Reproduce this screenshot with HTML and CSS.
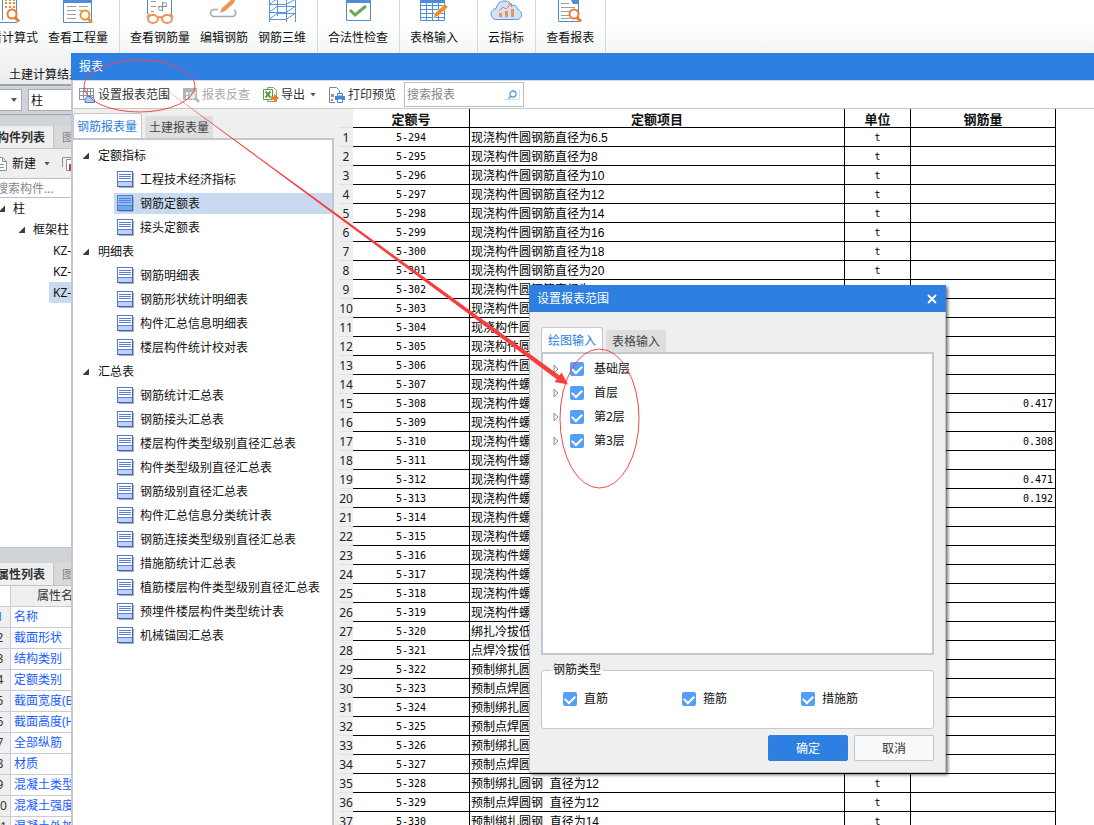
FILE: index.html
```html
<!DOCTYPE html>
<html lang="zh-CN">
<head>
<meta charset="utf-8">
<title>报表</title>
<link rel="stylesheet" href="styles.css">
</head>
<body>
<svg class="defs" aria-hidden="true">
  <symbol id="sheet" viewBox="0 0 17 17">
    <rect x="2" y="2" width="15" height="15" fill="#a9b0c0"/>
    <rect x=".5" y=".5" width="15" height="15" class="sheet-page"/>
    <rect x="1" y="10" width="14" height="5" class="sheet-foot"/>
    <path d="M2 3.500h12M2 5.500h12M2 7.500h12M1 10.500h14" stroke="#5b7fd6" fill="none"/>
    <path d="M.5 15.500h15V.5" stroke="#3f62bb" fill="none"/>
  </symbol>
  <symbol id="tri-open" viewBox="0 0 8 8"><path d="M7 .5V7H.5z" fill="#3c3c3c"/></symbol>
  <symbol id="tri-shut" viewBox="0 0 6 10"><path d="M1 1.200v7.600L5 5z" fill="#fff" stroke="#8a8a8a"/></symbol>
  <symbol id="magnifier" viewBox="0 0 16 16"><circle cx="7" cy="6" r="4.500" fill="#fff" stroke="currentColor" stroke-width="2"/><path d="M10 9.500l4 4" stroke="currentColor" stroke-width="3"/></symbol>
</svg>

<div class="app">
  <header class="ribbon">
    <div class="group">
      <button class="tool"><svg viewBox="0 0 32 24"><path d="M1 22.500V14.500h6v8h18M10.500 20V-1h14v22" fill="none" stroke="#4c8ed8"/><path d="M13 3h2M17 3h2M21 3h2M13 7h2M17 7h2M21 7h2M13 0h2M17 0h2M21 0h2" stroke="#f0883a" stroke-width="2"/><use href="#magnifier" x="13" y="8" width="16" height="16" color="#ef7b2c"/></svg><span>查看计算式</span></button>
      <button class="tool"><svg viewBox="0 0 32 24"><path d="M1.500 0v22.500h28V0" fill="#fff" stroke="#4c8ed8"/><path d="M1 1.500h29" stroke="#4c8ed8" stroke-width="3"/><path d="M5 6.500h9M5 10.500h9M5 14.500h9M5 18.500h9M17 6.500h9M17 10.500h4" stroke="#9aa0a8"/><use href="#magnifier" x="16" y="9" width="16" height="16" color="#f0952b"/></svg><span>查看工程量</span></button>
    </div>
    <div class="group">
      <button class="tool"><svg viewBox="0 0 32 24"><path d="M3.500 0v14M27.500 0v14" stroke="#4c8ed8"/><path d="M7 1.500h5M7 6.500h5M7 11.500h3M18.500 2v9M14 6.500h9" stroke="#8e959d"/><circle cx="16.500" cy="8.500" r="2" fill="none" stroke="#8e959d"/><circle cx="20.500" cy="4.500" r="2" fill="none" stroke="#8e959d"/><path d="M3 17l3-3M29 17l-3-3M13 18q3-2 6 0" fill="none" stroke="#f0935a" stroke-width="2"/><ellipse cx="9" cy="19" rx="5" ry="4" fill="#fff" stroke="#f0935a" stroke-width="2"/><ellipse cx="23" cy="19" rx="5" ry="4" fill="#fff" stroke="#f0935a" stroke-width="2"/></svg><span>查看钢筋量</span></button>
      <button class="tool"><svg viewBox="0 0 32 24"><path d="M10 9.500H6a3.500 3.500 0 0 0 0 7h18a3.500 3.500 0 0 0 2-6.500" fill="none" stroke="#a3a8ae" stroke-width="1.500"/><path d="M12 13l2-5L23 0h4l-1 3-9 8z" fill="#f0935a"/></svg><span>编辑钢筋</span></button>
      <button class="tool"><svg viewBox="0 0 32 24"><path d="M3.500 0v22M11.500 0v16M20.500 0v22M29.500 0v22M3 4.500h17l9-5M3 12.500h17l9-6M3 19.500h17l9-6M3 12.500l8-6h18M3 19.500l8-6h18M3 4.500l7-5" fill="none" stroke="#5a94dc"/></svg><span>钢筋三维</span></button>
    </div>
    <div class="group">
      <button class="tool"><svg viewBox="0 0 32 24"><path d="M4.500 0v20.500h24V0" fill="#fff" stroke="#4c8ed8"/><path d="M4 1.500h25" stroke="#4c8ed8" stroke-width="3"/><path d="M8 10l5 5L24 6" fill="none" stroke="#6aaa50" stroke-width="3"/></svg><span>合法性检查</span></button>
    </div>
    <div class="group wide">
      <button class="tool"><svg viewBox="0 0 32 24"><path d="M2.500 0v20.500h24V0M3 5.500h23M3 9.500h23M3 13.500h23M3 17.500h23M8.500 3v17M14.500 3v17M20.500 3v17" fill="#fff" stroke="#4c8ed8"/><path d="M2 1.500h25" stroke="#4c8ed8" stroke-width="3"/><path d="M15 18l2-5L27 4l3 3-10 9z" fill="#f08c22" stroke="#fff" stroke-width=".5"/></svg><span>表格输入</span></button>
    </div>
    <div class="group">
      <button class="tool"><svg viewBox="0 0 32 24"><path d="M7 19.500a5.500 5.500 0 0 1-1-11C7 4 10 1 14.500 1S21 3 22 5.500c3-1 5.500 1 5.500 4a5 5 0 0 1-2 10z" fill="#cfe2f8" stroke="#5a96da"/><path d="M10.500 17v-4M16.500 17v-6M22.500 17v-8" stroke="#f0935a" stroke-width="3"/><path d="M9 11l4-4 3 2 5-5M18 4h3.500v3" fill="none" stroke="#ef7f3a"/></svg><span>云指标</span></button>
    </div>
    <div class="group">
      <button class="tool"><svg viewBox="0 0 32 24"><path d="M4.500 0v21.500h20V0" fill="#fff" stroke="#4c8ed8"/><path d="M17 0h8v4h-6z" fill="#4c8ed8"/><path d="M7 3.500h8M7 7.500h14M7 11.500h9M7 15.500h8M7 18.500h9" stroke="#9aa0a8"/><use href="#magnifier" x="13" y="8" width="16" height="16" color="#ef7b2c"/></svg><span>查看报表</span></button>
    </div>
  </header>
  <div class="ribbon-caption">土建计算结果</div>
  <div class="combos">
    <label class="combo small"><select aria-label="楼层"><option></option></select></label>
    <label class="combo"><select aria-label="构件类型"><option>柱</option></select></label>
  </div>
  <aside class="side">
    <nav class="dock-tabs"><button class="on">构件列表</button><button>图纸管理</button></nav>
    <div class="side-tools">
      <button><svg width="14" height="16" viewBox="0 0 14 16"><path d="M.5 1.500h8l4 4v9H.5zM8.500 1.500v4h4M3 8.500h7M3 11.500h7" fill="#fff" stroke="#8b949e"/></svg>新建<i class="caret"></i></button>
      <button aria-label="复制"><svg width="16" height="16" viewBox="0 0 16 16"><path d="M.5 11V1.500H9" fill="none" stroke="#8b949e"/><path d="M4.500 3.500h7l3 3v8h-10z" fill="#fff" stroke="#8b949e"/><path d="M7 8h8v7H7z" fill="#d83a3a"/><path d="M9 10l4 4M13 10l-4 4" stroke="#fff"/></svg></button>
    </div>
    <input class="side-search" type="text" placeholder="搜索构件..." aria-label="搜索构件">
    <ul class="parts">
      <li class="p1"><svg><use href="#tri-open"/></svg>柱</li>
      <li class="p2"><svg><use href="#tri-open"/></svg>框架柱</li>
      <li class="p3"><span>KZ-1</span></li>
      <li class="p3"><span>KZ-2</span></li>
      <li class="p3"><span class="picked">KZ-3</span></li>
    </ul>
    <nav class="dock-tabs second"><button class="on">属性列表</button><button>图层管理</button></nav>
    <table class="props">
      <tr class="head"><th></th><td>属性名称</td></tr>
      <tr class="first"><th>1</th><td>名称</td></tr>
      <tr><th>2</th><td>截面形状</td></tr>
      <tr><th>3</th><td>结构类别</td></tr>
      <tr><th>4</th><td>定额类别</td></tr>
      <tr><th>5</th><td>截面宽度(B边)</td></tr>
      <tr><th>6</th><td>截面高度(H边)</td></tr>
      <tr><th>7</th><td>全部纵筋</td></tr>
      <tr><th>8</th><td>材质</td></tr>
      <tr><th>9</th><td>混凝土类型</td></tr>
      <tr><th>10</th><td>混凝土强度</td></tr>
      <tr><th>11</th><td>混凝土外加剂</td></tr>
    </table>
  </aside>
</div>

<section class="report">
  <h1 class="titlebar">报表</h1>
  <div class="toolbar">
    <button><svg width="17" height="16" viewBox="0 0 17 16"><path d="M.5 1.500h14v11H.5zM1 4.500h13M1 8.500h13M4.500 1v11M8.500 1v11M11.500 1v11" fill="#fff" stroke="#8b929c"/><path d="M6 15.500h9.500v-3l-3-3H8l-2 3z" fill="#a9cdf6" stroke="#4685d4"/></svg>设置报表范围</button>
    <button class="off" disabled><svg width="17" height="16" viewBox="0 0 17 16"><path d="M0 1h14v4H0zM0 5h3v8H0z" fill="#b4b4b4"/><path d="M.5 1.500h13v11H.5zM1 8.500h12M5.500 1v11M9.500 1v11" fill="none" stroke="#b4b4b4"/><circle cx="9.500" cy="9" r="3.500" fill="#eee" stroke="#b4b4b4"/><path d="M12 11l4 4" stroke="#b4b4b4" stroke-width="2.500"/></svg>报表反查</button>
    <button><svg width="16" height="16" viewBox="0 0 16 16"><path d="M4.500 3V.5h6l3 3v11h-9V13" fill="#fff" stroke="#8b949e"/><path d="M.5 2.500h9v10h-9z" fill="#fff" stroke="#5a9e3c"/><path d="M2.500 4.500l5 6M7.500 4.500l-5 6" stroke="#5a9e3c" stroke-width="2"/><path d="M8 9.500h3V7l5 4-5 4v-2.500H8z" fill="#f07c22"/></svg>导出<i class="caret"></i></button>
    <button><svg width="17" height="16" viewBox="0 0 17 16"><path d="M6 15.500H.5v-15h7l3 3V6" fill="#fff" stroke="#7b828c"/><path d="M2 7h3v3H2zM2 12h2v2H2z" fill="#8b949e"/><path d="M6 9h10v4H6z" fill="#4685d4"/><path d="M8.500 6.500h5V9h-5zM8.500 12h5v3.500h-5z" fill="#fff" stroke="#4685d4"/></svg>打印预览</button>
    <label class="find"><input type="text" placeholder="搜索报表" aria-label="搜索报表"><svg width="16" height="11" viewBox="0 0 16 11"><circle cx="9" cy="5" r="3" fill="none" stroke="#4a9fe0" stroke-width="1.300"/><path d="M7 7L4.500 9.500" stroke="#4a9fe0" stroke-width="1.500"/><path d="M0 10.500h15.500V0" fill="none" stroke="#ddd"/></svg></label>
  </div>
  <div class="report-body">
    <nav class="catalog">
      <div class="tabs"><button class="on">钢筋报表量</button><button>土建报表量</button></div>
      <div class="tree">
        <h2><svg><use href="#tri-open"/></svg>定额指标</h2>
        <ul>
          <li><a href="#"><svg><use href="#sheet"/></svg>工程技术经济指标</a></li>
          <li><a href="#" class="picked"><svg><use href="#sheet"/></svg>钢筋定额表</a></li>
          <li><a href="#"><svg><use href="#sheet"/></svg>接头定额表</a></li>
        </ul>
        <h2><svg><use href="#tri-open"/></svg>明细表</h2>
        <ul>
          <li><a href="#"><svg><use href="#sheet"/></svg>钢筋明细表</a></li>
          <li><a href="#"><svg><use href="#sheet"/></svg>钢筋形状统计明细表</a></li>
          <li><a href="#"><svg><use href="#sheet"/></svg>构件汇总信息明细表</a></li>
          <li><a href="#"><svg><use href="#sheet"/></svg>楼层构件统计校对表</a></li>
        </ul>
        <h2><svg><use href="#tri-open"/></svg>汇总表</h2>
        <ul>
          <li><a href="#"><svg><use href="#sheet"/></svg>钢筋统计汇总表</a></li>
          <li><a href="#"><svg><use href="#sheet"/></svg>钢筋接头汇总表</a></li>
          <li><a href="#"><svg><use href="#sheet"/></svg>楼层构件类型级别直径汇总表</a></li>
          <li><a href="#"><svg><use href="#sheet"/></svg>构件类型级别直径汇总表</a></li>
          <li><a href="#"><svg><use href="#sheet"/></svg>钢筋级别直径汇总表</a></li>
          <li><a href="#"><svg><use href="#sheet"/></svg>构件汇总信息分类统计表</a></li>
          <li><a href="#"><svg><use href="#sheet"/></svg>钢筋连接类型级别直径汇总表</a></li>
          <li><a href="#"><svg><use href="#sheet"/></svg>措施筋统计汇总表</a></li>
          <li><a href="#"><svg><use href="#sheet"/></svg>植筋楼层构件类型级别直径汇总表</a></li>
          <li><a href="#"><svg><use href="#sheet"/></svg>预埋件楼层构件类型统计表</a></li>
          <li><a href="#"><svg><use href="#sheet"/></svg>机械锚固汇总表</a></li>
        </ul>
      </div>
    </nav>
    <div class="sheet-area">
      <table class="quota">
        <colgroup><col class="c-no"><col class="c-code"><col class="c-name"><col class="c-unit"><col class="c-qty"></colgroup>
        <thead><tr><th class="no"></th><th>定额号</th><th>定额项目</th><th>单位</th><th>钢筋量</th></tr></thead>
        <tbody>
          <tr><th>1</th><td>5-294</td><td>现浇构件圆钢筋直径为6.5</td><td>t</td><td></td></tr>
          <tr><th>2</th><td>5-295</td><td>现浇构件圆钢筋直径为8</td><td>t</td><td></td></tr>
          <tr><th>3</th><td>5-296</td><td>现浇构件圆钢筋直径为10</td><td>t</td><td></td></tr>
          <tr><th>4</th><td>5-297</td><td>现浇构件圆钢筋直径为12</td><td>t</td><td></td></tr>
          <tr><th>5</th><td>5-298</td><td>现浇构件圆钢筋直径为14</td><td>t</td><td></td></tr>
          <tr><th>6</th><td>5-299</td><td>现浇构件圆钢筋直径为16</td><td>t</td><td></td></tr>
          <tr><th>7</th><td>5-300</td><td>现浇构件圆钢筋直径为18</td><td>t</td><td></td></tr>
          <tr><th>8</th><td>5-301</td><td>现浇构件圆钢筋直径为20</td><td>t</td><td></td></tr>
          <tr><th>9</th><td>5-302</td><td>现浇构件圆钢筋直径为22</td><td>t</td><td></td></tr>
          <tr><th>10</th><td>5-303</td><td>现浇构件圆钢筋</td><td>t</td><td></td></tr>
          <tr><th>11</th><td>5-304</td><td>现浇构件圆钢筋</td><td>t</td><td></td></tr>
          <tr><th>12</th><td>5-305</td><td>现浇构件圆钢筋</td><td>t</td><td></td></tr>
          <tr><th>13</th><td>5-306</td><td>现浇构件圆钢筋</td><td>t</td><td></td></tr>
          <tr><th>14</th><td>5-307</td><td>现浇构件螺纹钢</td><td>t</td><td></td></tr>
          <tr><th>15</th><td>5-308</td><td>现浇构件螺纹钢</td><td>t</td><td>0.417</td></tr>
          <tr><th>16</th><td>5-309</td><td>现浇构件螺纹钢</td><td>t</td><td></td></tr>
          <tr><th>17</th><td>5-310</td><td>现浇构件螺纹钢</td><td>t</td><td>0.308</td></tr>
          <tr><th>18</th><td>5-311</td><td>现浇构件螺纹钢</td><td>t</td><td></td></tr>
          <tr><th>19</th><td>5-312</td><td>现浇构件螺纹钢</td><td>t</td><td>0.471</td></tr>
          <tr><th>20</th><td>5-313</td><td>现浇构件螺纹钢</td><td>t</td><td>0.192</td></tr>
          <tr><th>21</th><td>5-314</td><td>现浇构件螺纹钢</td><td>t</td><td></td></tr>
          <tr><th>22</th><td>5-315</td><td>现浇构件螺纹钢</td><td>t</td><td></td></tr>
          <tr><th>23</th><td>5-316</td><td>现浇构件螺纹钢</td><td>t</td><td></td></tr>
          <tr><th>24</th><td>5-317</td><td>现浇构件螺纹钢</td><td>t</td><td></td></tr>
          <tr><th>25</th><td>5-318</td><td>现浇构件螺纹钢</td><td>t</td><td></td></tr>
          <tr><th>26</th><td>5-319</td><td>现浇构件螺纹钢</td><td>t</td><td></td></tr>
          <tr><th>27</th><td>5-320</td><td>绑扎冷拔低碳</td><td>t</td><td></td></tr>
          <tr><th>28</th><td>5-321</td><td>点焊冷拔低碳</td><td>t</td><td></td></tr>
          <tr><th>29</th><td>5-322</td><td>预制绑扎圆钢</td><td>t</td><td></td></tr>
          <tr><th>30</th><td>5-323</td><td>预制点焊圆钢</td><td>t</td><td></td></tr>
          <tr><th>31</th><td>5-324</td><td>预制绑扎圆钢</td><td>t</td><td></td></tr>
          <tr><th>32</th><td>5-325</td><td>预制点焊圆钢</td><td>t</td><td></td></tr>
          <tr><th>33</th><td>5-326</td><td>预制绑扎圆钢</td><td>t</td><td></td></tr>
          <tr><th>34</th><td>5-327</td><td>预制点焊圆钢</td><td>t</td><td></td></tr>
          <tr><th>35</th><td>5-328</td><td>预制绑扎圆钢&nbsp; 直径为12</td><td>t</td><td></td></tr>
          <tr><th>36</th><td>5-329</td><td>预制点焊圆钢&nbsp; 直径为12</td><td>t</td><td></td></tr>
          <tr><th>37</th><td>5-330</td><td>预制绑扎圆钢&nbsp; 直径为14</td><td>t</td><td></td></tr>
        </tbody>
      </table>
    </div>
  </div>
</section>

<section class="dialog" role="dialog" aria-label="设置报表范围">
  <header class="titlebar"><h2>设置报表范围</h2><button aria-label="关闭"><svg width="10" height="10" viewBox="0 0 10 10"><path d="M1 1l8 8M9 1L1 9" stroke="#fff" stroke-width="1.800"/></svg></button></header>
  <div class="dialog-body">
    <div class="tabs"><button class="on">绘图输入</button><button>表格输入</button></div>
    <div class="floors">
      <div><svg><use href="#tri-shut"/></svg><label><input type="checkbox" checked>基础层</label></div>
      <div><svg><use href="#tri-shut"/></svg><label><input type="checkbox" checked>首层</label></div>
      <div><svg><use href="#tri-shut"/></svg><label><input type="checkbox" checked>第2层</label></div>
      <div><svg><use href="#tri-shut"/></svg><label><input type="checkbox" checked>第3层</label></div>
    </div>
    <fieldset class="types">
      <legend>钢筋类型</legend>
      <label><input type="checkbox" checked>直筋</label>
      <label><input type="checkbox" checked>箍筋</label>
      <label><input type="checkbox" checked>措施筋</label>
    </fieldset>
    <footer><button class="primary">确定</button><button>取消</button></footer>
  </div>
</section>

<svg class="marks" width="700" height="500" viewBox="0 0 700 500" aria-hidden="true">
  <ellipse cx="139.500" cy="86" rx="55.500" ry="26" fill="none" stroke="#f04848"/>
  <ellipse cx="599.500" cy="418.500" rx="39.500" ry="69.500" fill="none" stroke="#f04848"/>
  <path d="M154 81L559.500 375.500L561.500 372.500L568 384.500L554.500 382L556.800 379.200z" fill="#f93c3c"/>
</svg>
</body>
</html>
```
FILE: styles.css
```css
* { box-sizing: border-box; }
html, body { height: 100%; }
body {
  margin: 0;
  overflow: hidden;
  position: relative;
  background: #fff;
  color: #111;
  font: 12px/18px "Noto Sans", "Noto Sans CJK SC", sans-serif;
}
button, input, select { font: inherit; color: inherit; margin: 0; }
button { border: 0; padding: 0; background: none; white-space: nowrap; }
h1, h2 { margin: 0; font-size: 12px; font-weight: 400; }
ul { list-style: none; margin: 0; padding: 0; }
a { color: inherit; text-decoration: none; }
.defs { position: absolute; width: 0; height: 0; }
.caret {
  width: 6px;
  height: 4px;
  background: #555;
  clip-path: polygon(0 0, 100% 0, 50% 100%);
}

/* main window */
.app {
  display: flex;
  flex-direction: column;
  height: 100%;
  margin-left: -24px;
  background: #d0d3d8;
}
.ribbon {
  display: flex;
  height: 53px;
  background: linear-gradient(#fff 40%, #f4f6f6);
}
.group {
  display: flex;
  gap: 10px;
  padding: 0 11px 0 10px;
  border-right: 1px solid #d6d8da;
}
.group:first-child { padding-left: 2px; }
.group.wide { padding-right: 19px; }
.tool {
  display: flex;
  flex-direction: column;
  align-items: center;
  gap: 5px;
}
.tool svg { width: 32px; height: 24px; }
.ribbon-caption {
  height: 33px;
  padding: 13px 0 0 33px;
  background: linear-gradient(#f4f6f6, #e9ebed);
  border-bottom: 2px solid #9fa5ac;
}
.combos {
  display: flex;
  gap: 6px;
  height: 29px;
  padding: 3px 0;
  border-bottom: 1px solid #9fa5ac;
}
.combo {
  display: grid;
  align-items: center;
  width: 150px;
  background: #fff;
  border: 1px solid #a6aab0;
}
.combo.small { width: 46px; }
.combo select {
  grid-area: 1 / 1;
  width: 100%;
  border: 0;
  padding: 1px 2px 0;
  background: none;
  appearance: none;
}
.combo::after {
  content: "";
  grid-area: 1 / 1;
  justify-self: end;
  width: 6px;
  height: 4px;
  margin-right: 4px;
  background: #555;
  clip-path: polygon(0 0, 100% 0, 50% 100%);
}
.side {
  display: flex;
  flex-direction: column;
  flex: 1;
  width: 200px;
  min-height: 0;
  padding-top: 11px;
}
.dock-tabs {
  display: flex;
  flex: none;
  height: 23px;
  background: #d9d9d9;
  border-bottom: 1px solid #c0c4ca;
}
.dock-tabs button { width: 80px; padding: 2px 0 0 8px; text-align: left; color: #888; }
.dock-tabs .on {
  width: 78px;
  padding-left: 21px;
  background: #efefef;
  border-right: 1px solid #c0c4ca;
  color: #333;
  font-weight: 700;
}
.side-tools {
  display: flex;
  flex: none;
  align-items: center;
  gap: 12px;
  height: 29px;
  padding-left: 18px;
  background: #efefef;
}
.side-tools button { display: flex; align-items: center; gap: 4px; }
.side-tools .caret { margin-left: 4px; }
.side-search {
  flex: none;
  width: 100%;
  height: 20px;
  padding: 0 0 0 20px;
  border: solid #b9bdc4;
  border-width: 1px 0;
  background: #fff;
}
::placeholder { color: #888; opacity: 1; }
.parts { flex: none; height: 350px; background: #fff; border-bottom: 1px solid #c0c4ca; }
.parts li { display: flex; align-items: center; gap: 7px; height: 21px; }
.parts svg { width: 8px; height: 8px; }
.p1 { padding-left: 22px; }
.p2 { padding-left: 42px; }
.p3 { padding-left: 73px; }
.p3 span { flex: 1; padding-left: 4px; line-height: 21px; }
.p3 .picked, .tree .picked { background: #c9d9f0; }
.second { margin-top: 15px; }
.props { border-spacing: 0; width: 100%; table-layout: fixed; background: #fff; }
.props tr { height: 21px; }
.props th, .props td {
  padding: 0;
  border: solid #c9ccd2;
  border-width: 0 1px 1px 0;
  line-height: 20px;
  white-space: nowrap;
}
.props th { width: 35px; padding-left: 14px; background: #efefef; font-weight: 400; color: #333; }
.props td { padding-left: 3px; color: #1a5cff; }
.props .head th { background: #fff; }
.props .head td { padding-left: 26px; background: #efefef; color: #333; }
.props .first th { color: #2d7fe1; }

/* report window */
.report {
  position: absolute;
  inset: 53px 0 0 71px;
  display: flex;
  flex-direction: column;
  background: #efefef;
}
.titlebar {
  flex: none;
  height: 27px;
  padding-left: 8px;
  background: #2d7fe1;
  color: #fff;
  line-height: 27px;
}
.toolbar {
  display: flex;
  flex: none;
  align-items: center;
  height: 29px;
  padding-left: 6px;
  gap: 13px;
  background: #fff;
  border-left: 2px solid #c4c8ce;
  border-bottom: 1px solid #c6c8ce;
  border-top: 1px solid #d5d8dc;
  color: #333;
}
.toolbar .off { color: #aaa; }
.toolbar button { display: flex; align-items: center; gap: 2px; }
.toolbar .caret { margin-left: 3px; }
.find {
  display: flex;
  align-items: center;
  width: 120px;
  height: 25px;
  margin-left: -5px;
  padding: 0 3px 0 2px;
  border: 1px solid #b9bdc4;
}
.find input { flex: 1; min-width: 0; border: 0; padding: 0; background: none; }
.report-body { display: flex; flex: 1; min-height: 0; border-left: 2px solid #c4c8ce; }
.catalog { display: flex; flex-direction: column; width: 261px; padding-top: 4px; }
.tabs { display: flex; align-items: flex-end; gap: 3px; height: 25px; }
.tabs button {
  height: 22px;
  padding: 2px 6px 0;
  background: #dedede;
  border-radius: 3px 3px 0 0;
  color: #444;
}
.tabs .on {
  height: 25px;
  border: 1px solid #c4c8ce;
  border-bottom: 0;
  background: #fff;
  color: #2d7fe1;
}
.catalog .tabs .on { padding: 2px 4px 0 3px; }
.catalog .tabs button:last-child { padding: 2px 4px 0; }
.tree {
  flex: 1;
  padding-top: 4px;
  background: #fff;
  border: solid #c4c8ce;
  border-width: 2px 2px 0 0;
}
.tree h2 { display: flex; align-items: center; gap: 8px; height: 24px; padding-left: 9px; }
.tree h2 svg { width: 8px; height: 8px; }
.tree li { height: 24px; padding: 1px 0 2px 41px; }
.tree a { display: flex; align-items: center; gap: 6px; height: 21px; padding-left: 3px; }
.tree a svg { width: 17px; height: 17px; }
.sheet-page { fill: var(--page, #fff); stroke: #5b7bd0; }
.sheet-foot { fill: var(--foot, #bdd0fa); }
.tree .picked { --page: #8dc0f5; --foot: #6aaaf0; }
.sheet-area { flex: 1; padding-left: 5px; overflow: hidden; background: linear-gradient(90deg, #efefef 19px, #fff 19px); }
.quota { border-spacing: 0; width: 717px; table-layout: fixed; background: #fff; }
.quota tr { height: 19px; }
.quota th, .quota td {
  height: 19px;
  padding: 2px 0 0;
  border: solid #000;
  border-width: 0 1px 1px 0;
  line-height: 16px;
  white-space: nowrap;
  overflow: hidden;
}
.quota thead th { font-size: 13px; }
.quota tbody th, .quota .no {
  background: #efefef;
  border-color: #e2e2e2;
  border-right: 0;
  font-weight: 400;
  color: #222;
}
.quota td { font-family: "DejaVu Sans Mono", monospace; font-size: 10px; text-align: center; color: #000; }
.quota td:nth-child(3) {
  padding-left: 1px;
  font: 12px/16px "Liberation Sans", "Noto Sans CJK SC", sans-serif;
  text-align: left;
}
.quota td:last-child { padding-right: 2px; text-align: right; }
.c-no { width: 14px; }
.c-code { width: 117px; }
.c-name { width: 375px; }
.c-unit { width: 66px; }
.c-qty { width: 145px; }

/* dialog */
.dialog {
  position: absolute;
  left: 529px;
  top: 285px;
  width: 417px;
  background: #efefef;
  border: 1px solid #b7c0cd;
  border-top: 0;
  box-shadow: 2px 2px 3px rgba(0, 0, 0, .55);
}
.dialog .titlebar { display: flex; justify-content: space-between; margin: 0 -1px; padding-right: 9px; }
.dialog .titlebar button { display: flex; align-items: center; }
.dialog-body { padding: 15px 11px 11px; }
.floors { height: 303px; padding: 3px 0 0 10px; background: #fff; border: 2px solid #c4c8ce; }
.floors div { display: flex; align-items: center; gap: 11px; height: 24px; }
.floors svg { width: 6px; height: 10px; }
.floors label { display: flex; align-items: center; gap: 10px; }
input[type="checkbox"] {
  display: grid;
  place-items: center;
  width: 14px;
  height: 14px;
  border-radius: 2px;
  background: #559ffb;
  appearance: none;
}
input[type="checkbox"]::after {
  content: "";
  width: 8px;
  height: 5px;
  margin-bottom: 2px;
  border: solid #fff;
  border-width: 0 0 2px 2px;
  transform: rotate(-45deg);
}
.types {
  display: grid;
  grid-template-columns: 119px 119px 119px;
  height: 68px;
  margin: 6px 0 0;
  padding: 11px 0 0 21px;
  border: 1px solid #c4c8ce;
  border-radius: 3px;
  background: #fff;
}
.types legend { margin-left: -12px; padding: 0 2px; }
.types label { display: flex; align-items: center; align-self: start; gap: 7px; }
.dialog footer { display: flex; justify-content: flex-end; gap: 6px; margin-top: 6px; }
.dialog footer button {
  width: 80px;
  height: 26px;
  padding-top: 1px;
  border: 1px solid #bcc6d4;
  border-radius: 2px;
  background: #fafafa;
  color: #333;
}
.dialog footer .primary { border-color: #2d7fe1; background: #2d7fe1; color: #fff; }

.marks { position: absolute; left: 0; top: 0; pointer-events: none; }
```
